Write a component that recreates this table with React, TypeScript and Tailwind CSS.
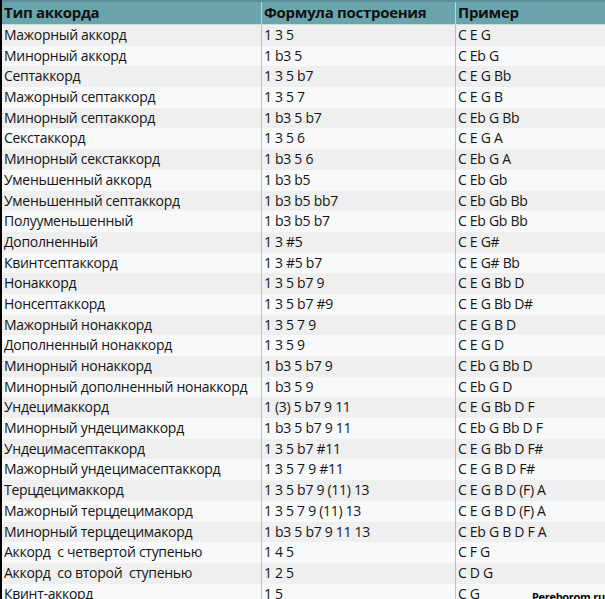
import React from "react";

// chord rows: name, formula, example
const chords: [string, string, string][] = [
    ["Мажорный аккорд", "1 3 5", "C E G"],
    ["Минорный аккорд", "1 b3 5", "C Eb G"],
    ["Септаккорд", "1 3 5 b7", "C E G Bb"],
    ["Мажорный септаккорд", "1 3 5 7", "C E G B"],
    ["Минорный септаккорд", "1 b3 5 b7", "C Eb G Bb"],
    ["Секстаккорд", "1 3 5 6", "C E G A"],
    ["Минорный секстаккорд", "1 b3 5 6", "C Eb G A"],
    ["Уменьшенный аккорд", "1 b3 b5", "C Eb Gb"],
    ["Уменьшенный септаккорд", "1 b3 b5 bb7", "C Eb Gb Bb"],
    ["Полууменьшенный", "1 b3 b5 b7", "C Eb Gb Bb"],
    ["Дополненный", "1 3 #5", "C E G#"],
    ["Квинтсептаккорд", "1 3 #5 b7", "C E G# Bb"],
    ["Нонаккорд", "1 3 5 b7 9", "C E G Bb D"],
    ["Нонсептаккорд", "1 3 5 b7 #9", "C E G Bb D#"],
    ["Мажорный нонаккорд", "1 3 5 7 9", "C E G B D"],
    ["Дополненный нонаккорд", "1 3 5 9", "C E G D"],
    ["Минорный нонаккорд", "1 b3 5 b7 9", "C Eb G Bb D"],
    ["Минорный дополненный нонаккорд", "1 b3 5 9", "C Eb G D"],
    ["Ундецимаккорд", "1 (3) 5 b7 9 11", "C E G Bb D F"],
    ["Минорный ундецимаккорд", "1 b3 5 b7 9 11", "C Eb G Bb D F"],
    ["Ундецимасептаккорд", "1 3 5 b7 #11", "C E G Bb D F#"],
    ["Мажорный ундецимасептаккорд", "1 3 5 7 9 #11", "C E G B D F#"],
    ["Терцдецимаккорд", "1 3 5 b7 9 (11) 13", "C E G B D (F) A"],
    ["Мажорный терцдецимакорд", "1 3 5 7 9 (11) 13", "C E G B D (F) A"],
    ["Минорный терцдецимакорд", "1 b3 5 b7 9 11 13", "C Eb G B D F A"],
    ["Аккорд  с четвертой ступенью", "1 4 5", "C F G"],
    ["Аккорд  со второй  ступенью", "1 2 5", "C D G"],
    ["Квинт-аккорд", "1 5", "C G"],
];

const cols = "grid grid-cols-[260px_194px_1fr]";

export default function App() {
    return (
        <div
            className="relative w-[605px] h-[599px] overflow-hidden bg-white border-l-2 border-black text-[#151515]"
            style={{ fontFamily: '"Open Sans", "Noto Sans", sans-serif' }}
        >
            {/* header */}
            <div className={`${cols} h-[25px] bg-[#6aa5ad] border-t-2 border-[#5b8e96] border-b border-b-[#c6dde0] text-[15px] font-bold text-[#111]`}>
                <div className="pl-[2px] leading-[21px] tracking-[-0.3px] border-r border-[#b8d5da]">Тип аккорда</div>
                <div className="pl-[2px] leading-[21px] tracking-[-0.3px] border-r border-[#b8d5da]">Формула построения</div>
                <div className="pl-[2px] leading-[21px] tracking-[-0.3px]">Пример</div>
            </div>

            {/* rows */}
            {chords.map(([name, formula, example], i) => (
                <div
                    key={i}
                    className={`${cols} h-[20.7px] text-[14px] leading-[20.7px] tracking-[-0.3px] whitespace-pre ${i % 2 === 0 ? "bg-[#efefef]" : "bg-[#f8f9fb]"}`}
                >
                    <div className="pl-[2px] border-r border-[#a9c7cd]">{name}</div>
                    <div className="pl-[2px] border-r border-[#a9c7cd]">{formula}</div>
                    <div className="pl-[2px]">{example}</div>
                </div>
            ))}

            {/* watermark */}
            <div className="absolute right-0 bottom-[-6px] whitespace-nowrap text-[11px] tracking-[-0.3px] font-bold text-black">Pereborom.ru</div>
        </div>
    );
}
